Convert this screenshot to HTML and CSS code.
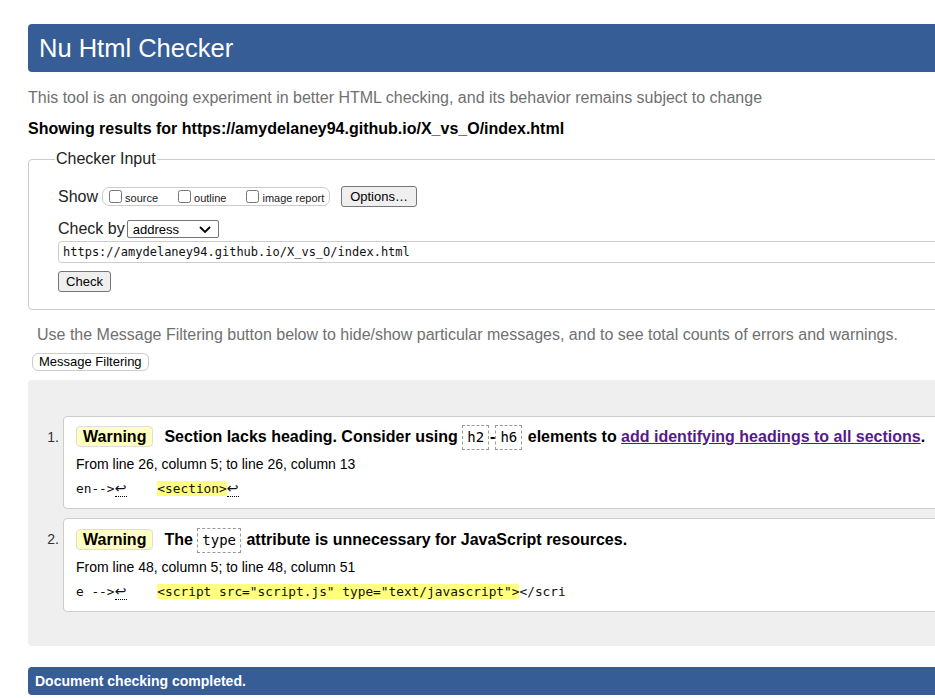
FILE: index.html
```html
<!DOCTYPE html>
<html lang="en">
<head>
<meta charset="utf-8">
<title>Nu Html Checker</title>
<link rel="stylesheet" href="styles.css">
</head>
<body>
<div class="page">
  <h1 class="title">Nu Html Checker</h1>
  <p class="intro">This tool is an ongoing experiment in better HTML checking, and its behavior remains subject to change</p>
  <p class="showing">Showing results for https://amydelaney94.github.io/X_vs_O/index.html</p>

  <fieldset class="input">
    <legend class="legend">Checker Input</legend>
    <div class="row show-row">
      <span class="label">Show</span>
      <span class="group">
        <label class="opt"><input type="checkbox" class="cb"><span>source</span></label>
        <label class="opt"><input type="checkbox" class="cb"><span>outline</span></label>
        <label class="opt"><input type="checkbox" class="cb"><span>image report</span></label>
      </span>
      <button class="btn options">Options…</button>
    </div>
    <div class="row by-row">
      <span class="label">Check by</span>
      <span class="select"><span>address</span>
        <svg class="chev" width="12" height="7" viewBox="0 0 12 7"><path d="M1 1 L6 6 L11 1" fill="none" stroke="#000" stroke-width="1.8"/></svg>
      </span>
    </div>
    <div class="url">https://amydelaney94.github.io/X_vs_O/index.html</div>
    <button class="btn check">Check</button>
  </fieldset>

  <p class="filter-note">Use the Message Filtering button below to hide/show particular messages, and to see total counts of errors and warnings.</p>
  <button class="filter-btn">Message Filtering</button>

  <div class="results">
    <ol class="list">
      <li class="item">
        <span class="num">1.</span>
        <div class="msg">
          <p class="first"><span class="badge">Warning</span><span class="text">Section lacks heading. Consider using <code class="c">h2</code>-<code class="c">h6</code> elements to <a class="link" href="#">add identifying headings to all sections</a>.</span></p>
          <p class="loc">From line 26, column 5; to line 26, column 13</p>
          <p class="extract">en--&gt;<span class="lf">↩</span>    <b class="hl">&lt;section&gt;</b><span class="lf">↩</span></p>
        </div>
      </li>
      <li class="item">
        <span class="num">2.</span>
        <div class="msg">
          <p class="first"><span class="badge">Warning</span><span class="text">The <code class="c">type</code> attribute is unnecessary for JavaScript resources.</span></p>
          <p class="loc">From line 48, column 5; to line 48, column 51</p>
          <p class="extract">e --&gt;<span class="lf">↩</span>    <b class="hl">&lt;script src="script.js" type="text/javascript"&gt;</b>&lt;/scri</p>
        </div>
      </li>
    </ol>
  </div>

  <p class="done">Document checking completed.</p>
</div>
</body>
</html>
```
FILE: styles.css
```css
html, body {
  margin: 0;
  padding: 0;
  background: #fff;
  overflow: hidden;
}
body {
  font-family: "Liberation Sans", Arial, sans-serif;
  color: #000;
}
.page {
  width: 1040px;
  margin-left: 28px;
  padding-top: 24px;
}
.title {
  margin: 0;
  height: 48px;
  line-height: 48px;
  padding-left: 11px;
  background: #365d95;
  color: #fff;
  font-size: 25.5px;
  font-weight: normal;
  border-radius: 4px;
}
.intro {
  margin: 16px 0 0;
  font-size: 16px;
  line-height: 20px;
  color: #707070;
}
.showing {
  margin: 11px 0 0;
  font-size: 16px;
  line-height: 20px;
  font-weight: bold;
  color: #000;
}
.input {
  margin: 10px 0 0;
  padding: 17px 29px 17px;
  border: 1px solid #ccc;
  border-radius: 4px;
  min-width: 0;
}
.legend {
  padding: 0 1px;
  margin-left: -3px;
  font-size: 16px;
  line-height: 20px;
  color: #222;
}
.row {
  display: flex;
  align-items: center;
}
.label {
  font-size: 16px;
  line-height: 20px;
  color: #222;
}
.show-row {
  height: 21px;
}
.group {
  display: flex;
  align-items: center;
  margin-left: 4px;
  height: 17px;
  width: 220px;
  border: 1px solid #ccc;
  border-radius: 7px;
  padding-left: 6px;
  box-sizing: content-box;
}
.opt {
  display: flex;
  align-items: center;
  font-size: 11px;
  color: #222;
  margin-right: 20px;
}
.opt:last-child {
  margin-right: 0;
}
.opt span {
  padding-top: 3px;
}
.cb {
  margin: 0 3px 0 0;
  width: 13px;
  height: 13px;
}
.btn {
  font-family: "Liberation Sans", Arial, sans-serif;
  font-size: 13px;
  color: #000;
  background: #efefef;
  border: 1px solid #767676;
  border-radius: 3px;
  height: 21px;
  padding: 0 8px;
  line-height: 19px;
}
.options {
  margin-left: 11px;
  width: 76px;
}
.by-row {
  margin-top: 13px;
  height: 18px;
}
.select {
  margin-left: 2px;
  height: 16px;
  border: 1px solid #767676;
  border-radius: 2px;
  display: flex;
  align-items: center;
  justify-content: space-between;
  padding: 0 7px 0 5px;
  box-sizing: content-box;
  font-size: 13px;
  color: #000;
  width: 78px;
}
.chev {
  display: block;
}
.url {
  margin-top: 3px;
  height: 20px;
  line-height: 20px;
  border: 1px solid #ccc;
  border-radius: 4px;
  padding-left: 4px;
  font-family: "DejaVu Sans Mono", "Liberation Mono", monospace;
  font-size: 12px;
  color: #111;
}
.check {
  margin-top: 8px;
  width: 53px;
  padding: 0;
  display: block;
}
.filter-note {
  margin: 15px 0 0 9px;
  font-size: 16px;
  line-height: 20px;
  color: #707070;
}
.filter-btn {
  display: block;
  margin: 8px 0 0 4px;
  height: 18px;
  padding: 0 6px;
  line-height: 16px;
  background: #fff;
  border: 1px solid #ccc;
  border-radius: 6px;
  font-family: "Liberation Sans", Arial, sans-serif;
  font-size: 13px;
  color: #000;
}
.results {
  margin-top: 9px;
  background: #efefef;
  border-radius: 4px;
  padding: 36px 0 34px;
}
.list {
  margin: 0;
  padding: 0;
  list-style: none;
}
.item {
  display: flex;
  align-items: flex-start;
}
.item + .item {
  margin-top: 9px;
}
.num {
  width: 31px;
  flex: none;
  text-align: right;
  font-size: 14px;
  line-height: 16px;
  margin-top: 13px;
  margin-right: 4px;
  color: #333;
}
.msg {
  flex: 1;
  background: #fff;
  border: 1px solid #ccc;
  border-radius: 4px;
  padding: 6px 12px 11px;
}
.item + .item .msg {
  padding-top: 7px;
}
.msg p {
  margin: 0;
}
.first {
  font-size: 16px;
  line-height: 27px;
  font-weight: bold;
  white-space: nowrap;
}
.badge {
  display: inline-block;
  line-height: 19px;
  padding: 0 6px;
  background: #ffffc0;
  border: 1px solid #ddd;
  border-radius: 4px;
  margin-right: 11px;
}
.c {
  display: inline-block;
  font-family: "DejaVu Sans Mono", "Liberation Mono", monospace;
  font-size: 14px;
  font-weight: normal;
  line-height: 23px;
  padding: 0 4px;
  border: 1px dashed #999;
  margin: 0 1px 0 0;
}
.link {
  color: #551a8b;
  text-decoration: underline;
}
.loc {
  margin-top: 6px !important;
  font-size: 14px;
  line-height: 16px;
}
.extract {
  margin-top: 9px !important;
  font-family: "DejaVu Sans Mono", "Liberation Mono", monospace;
  font-size: 12.8px;
  line-height: 16px;
  white-space: pre;
  color: #111;
}
.hl {
  font-weight: normal;
  background: #ffff80;
}
.lf {
  display: inline-block;
  width: 12px;
  line-height: 15px;
  text-align: center;
  font-family: "DejaVu Sans", sans-serif;
  font-size: 14px;
  border-bottom: 1px dotted #000;
}
.done {
  margin: 21px 0 0;
  height: 28px;
  line-height: 28px;
  padding-left: 7px;
  background: #365d95;
  color: #fff;
  font-size: 14px;
  font-weight: bold;
  border-radius: 4px;
}
```
